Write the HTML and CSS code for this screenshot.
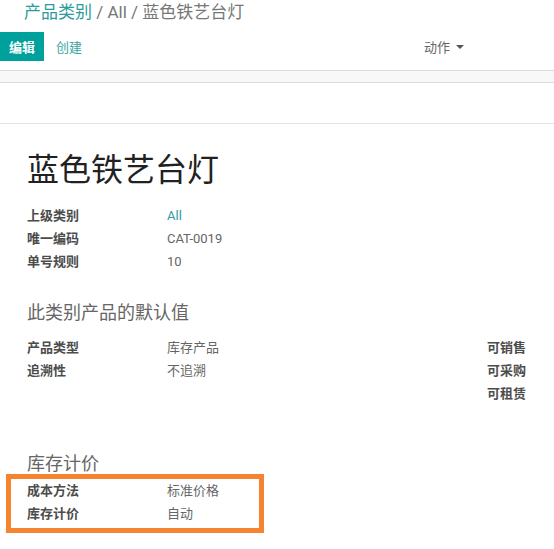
FILE: index.html
```html
<!DOCTYPE html>
<html lang="zh">
<head>
<meta charset="utf-8">
<link rel="stylesheet" href="styles.css">
</head>
<body>
<div class="cp">
  <div class="breadcrumb"><span class="bc-link">产品类别</span> / All / 蓝色铁艺台灯</div>
  <div class="cp-buttons">
    <div class="left-btns">
      <button class="btn-primary">编辑</button>
      <button class="btn-link">创建</button>
    </div>
    <div class="action">动作 <span class="caret"></span></div>
  </div>
</div>
<div class="band"></div>
<div class="statusbar"></div>
<div class="sheet">
  <h1 class="title">蓝色铁艺台灯</h1>
  <div class="group first">
    <div class="row"><span class="label">上级类别</span><span class="value link">All</span></div>
    <div class="row"><span class="label">唯一编码</span><span class="value">CAT-0019</span></div>
    <div class="row"><span class="label">单号规则</span><span class="value">10</span></div>
  </div>
  <h2 class="sec sec1">此类别产品的默认值</h2>
  <div class="two-col">
    <div class="group">
      <div class="row"><span class="label">产品类型</span><span class="value">库存产品</span></div>
      <div class="row"><span class="label">追溯性</span><span class="value">不追溯</span></div>
    </div>
    <div class="flags">
      <div class="row"><span class="label">可销售</span></div>
      <div class="row"><span class="label">可采购</span></div>
      <div class="row"><span class="label">可租赁</span></div>
    </div>
  </div>
  <h2 class="sec sec2">库存计价</h2>
  <div class="group">
    <div class="row"><span class="label">成本方法</span><span class="value">标准价格</span></div>
    <div class="row"><span class="label">库存计价</span><span class="value">自动</span></div>
  </div>
</div>
<div class="highlight"></div>
</body>
</html>
```
FILE: styles.css
```css
html, body {
  margin: 0;
  padding: 0;
  background: #fff;
  font-family: Roboto, "Noto Sans CJK SC", sans-serif;
  font-size: 13px;
  color: #4c4c4c;
}
body { position: relative; width: 554px; height: 549px; overflow: hidden; }

.cp {
  height: 70px;
  border-bottom: 1px solid #dcdcdc;
  box-sizing: content-box;
}
.breadcrumb {
  padding-left: 24px;
  font-size: 17px;
  line-height: 24px;
  color: #777;
}
.bc-link { color: #2b9c9b; }
.cp-buttons {
  margin-top: 8px;
  display: flex;
  align-items: center;
  justify-content: space-between;
  padding-right: 90px;
}
.left-btns { display: flex; align-items: center; }
.btn-primary {
  width: 44px;
  height: 29px;
  background: #00a09d;
  color: #fff;
  border: 0;
  border-radius: 0;
  font: bold 13px Roboto, "Noto Sans CJK SC", sans-serif;
  padding: 0;
}
.btn-link {
  margin-left: 12px;
  background: none;
  border: 0;
  color: #3aa6a3;
  font: 13px Roboto, "Noto Sans CJK SC", sans-serif;
  padding: 0;
}
.action {
  color: #666;
  display: flex;
  align-items: center;
  gap: 6px;
}
.caret {
  width: 0; height: 0;
  border-left: 4px solid transparent;
  border-right: 4px solid transparent;
  border-top: 4px solid #555;
}
.band {
  height: 11px;
  background: #f8f8f8;
  border-bottom: 1px solid #dcdcdc;
}
.statusbar {
  height: 40px;
  border-bottom: 1px solid #e2e2e2;
}
.sheet {
  padding: 0 28px 0 27px;
}
.title {
  margin: 26px 0 0;
  font-size: 32px;
  font-weight: normal;
  line-height: 40px;
  color: #212121;
}
.group.first { margin-top: 14px; }
.row {
  display: flex;
  height: 23px;
  line-height: 23px;
}
.label {
  width: 140px;
  flex: none;
  font-weight: bold;
  color: #4c4c4c;
}
.value { color: #666; }
.value.link { color: #2b9c9b; }
.sec {
  margin: 0;
  font-size: 18px;
  line-height: 26px;
  font-weight: normal;
  color: #666;
}
.sec1 { margin-top: 27px; margin-bottom: 10px; }
.sec2 { margin-top: 46px; margin-bottom: 2px; }
.two-col { display: flex; justify-content: space-between; }
.flags .label { width: auto; }
.highlight {
  position: absolute;
  left: 6px;
  top: 474px;
  width: 258px;
  height: 59px;
  box-sizing: border-box;
  border: 5px solid #f5832f;
}
```
